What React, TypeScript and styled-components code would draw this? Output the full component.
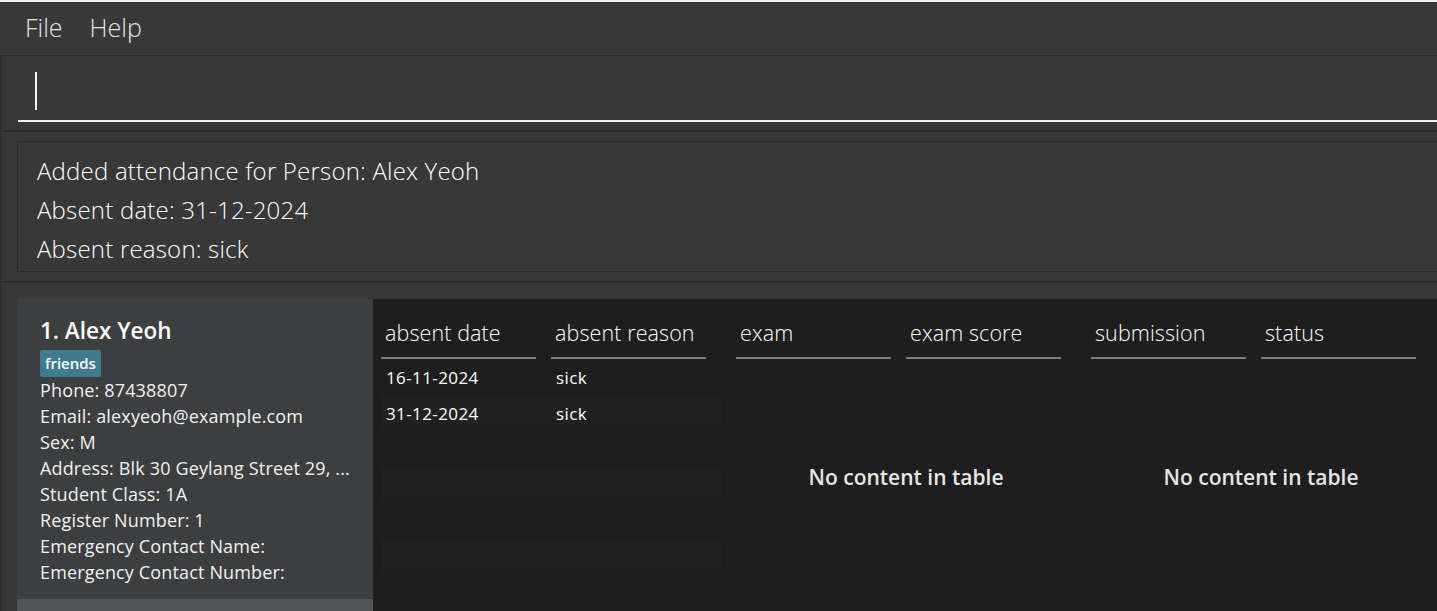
import React from "react";
import styled, { createGlobalStyle } from "styled-components";

const GlobalStyle = createGlobalStyle`
  html, body {
    margin: 0;
    padding: 0;
    background: #383838;
    overflow: hidden;
  }
  * { box-sizing: border-box; }
`;

const FONT = `"Open Sans", "Noto Sans", "Liberation Sans", sans-serif`;

const Window = styled.div`
  width: 1437px;
  height: 611px;
  display: flex;
  flex-direction: column;
  background: #383838;
  border-top: 2px solid #f0f0f0;
  font-family: ${FONT};
  overflow: hidden;
`;

const MenuBar = styled.div`
  height: 54px;
  display: flex;
  align-items: center;
  padding-left: 25px;
  gap: 27px;
  background: #383838;
  border-bottom: 1px solid #2b2b2b;
`;

const MenuItem = styled.span`
  font-size: 25px;
  font-weight: 300;
  color: #e4e4e4;
  line-height: 1;
  padding-bottom: 2px;
`;

const CommandPane = styled.div`
  height: 76px;
  border-left: 2px solid #2e2e2e;
  border-bottom: 2px solid #2b2b2b;
  padding: 0 0 8px 16px;
  display: flex;
  align-items: flex-end;
`;

const CommandField = styled.div`
  flex: 1;
  height: 60px;
  border-bottom: 2px solid #f2f2f2;
  display: flex;
  align-items: flex-start;
  padding: 10px 0 0 17px;
`;

const Caret = styled.div`
  width: 2px;
  height: 38px;
  background: #f5f5f5;
`;

const ResultPane = styled.div`
  height: 151px;
  border-left: 2px solid #2e2e2e;
  border-bottom: 2px solid #2b2b2b;
  padding: 9px 0 9px 15px;
  display: flex;
`;

const ResultBox = styled.div`
  flex: 1;
  border: 1px solid #2b2b2b;
  border-right: none;
  padding: 9px 0 0 19px;
  display: flex;
  flex-direction: column;
`;

const ResultLine = styled.div`
  font-size: 24px;
  font-weight: 300;
  letter-spacing: 0.2px;
  line-height: 39px;
  color: #ffffff;
  white-space: nowrap;
`;

const ListPane = styled.div`
  flex: 1;
  border-left: 2px solid #2e2e2e;
  padding: 16px 0 0 15px;
  display: flex;
  min-height: 0;
`;

const PersonList = styled.div`
  width: 356px;
  display: flex;
  flex-direction: column;
`;

const Card = styled.div<{ $odd?: boolean }>`
  background: ${(p) => (p.$odd ? "#505557" : "#3d3e40")};
  padding: ${(p) => (p.$odd ? "0" : "18px 0 0 23px")};
  height: ${(p) => (p.$odd ? "40px" : "300px")};
  flex: 0 0 auto;
  display: flex;
  flex-direction: column;
  align-items: flex-start;
`;

const Name = styled.div`
  font-size: 22.5px;
  font-weight: 600;
  line-height: 28px;
  color: #ffffff;
  margin-bottom: 5px;
`;

const Tag = styled.span`
  background: #3e7b91;
  color: #ffffff;
  font-size: 15px;
  font-weight: 600;
  line-height: 27px;
  padding: 0 5px;
  border-radius: 2px;
`;

const Field = styled.div`
  font-size: 18px;
  font-weight: 400;
  letter-spacing: 0.15px;
  line-height: 26px;
  color: #f2f2f2;
  white-space: nowrap;
`;

const TablePanel = styled.div`
  flex: 1;
  background: #1e1e1e;
  padding: 10px 0 0 8px;
  display: flex;
  gap: 15px;
  align-items: stretch;
`;

const Table = styled.div`
  width: 340px;
  display: flex;
  flex-direction: column;
`;

const HeaderRow = styled.div`
  display: grid;
  grid-template-columns: 170px 170px;
`;

const HeaderCell = styled.div`
  margin-right: 15px;
  height: 50px;
  border-bottom: 2px solid #7d7d7d;
  padding: 6px 0 0 4px;
  font-size: 21.5px;
  font-weight: 300;
  letter-spacing: 0.1px;
  line-height: 36px;
  color: #ffffff;
  white-space: nowrap;
`;

const Row = styled.div<{ $alt?: boolean }>`
  display: grid;
  grid-template-columns: 170px 170px;
  height: 36px;
  align-items: center;
  background: ${(p) => (p.$alt ? "#212121" : "transparent")};
`;

const Cell = styled.div`
  padding-left: 5px;
  font-size: 17px;
  letter-spacing: 0.4px;
  color: #ffffff;
  white-space: nowrap;
`;

const Placeholder = styled.div`
  flex: 0 0 auto;
  height: 236px;
  display: flex;
  align-items: center;
  justify-content: center;
  font-size: 21px;
  font-weight: 600;
  color: #e6e6e6;
`;

type TableData = { headers: [string, string]; rows: [string, string][] };

const tables: TableData[] = [
  {
    headers: ["absent date", "absent reason"],
    rows: [
      ["16-11-2024", "sick"],
      ["31-12-2024", "sick"],
      ["", ""],
      ["", ""],
      ["", ""],
      ["", ""],
      ["", ""],
    ],
  },
  { headers: ["exam", "exam score"], rows: [] },
  { headers: ["submission", "status"], rows: [] },
];

const fields = [
  "Phone: 87438807",
  "Email: alexyeoh@example.com",
  "Sex: M",
  "Address: Blk 30 Geylang Street 29, ...",
  "Student Class: 1A",
  "Register Number: 1",
  "Emergency Contact Name:",
  "Emergency Contact Number:",
];

export default function App() {
  return (
    <>
      <GlobalStyle />
      <Window>
        <MenuBar>
          <MenuItem>File</MenuItem>
          <MenuItem>Help</MenuItem>
        </MenuBar>
        <CommandPane>
          <CommandField>
            <Caret />
          </CommandField>
        </CommandPane>
        <ResultPane>
          <ResultBox>
            <ResultLine>Added attendance for Person: Alex Yeoh</ResultLine>
            <ResultLine>Absent date: 31-12-2024</ResultLine>
            <ResultLine>Absent reason: sick</ResultLine>
          </ResultBox>
        </ResultPane>
        <ListPane>
          <PersonList>
            <Card>
              <Name>1. Alex Yeoh</Name>
              <Tag>friends</Tag>
              {fields.map((f) => (
                <Field key={f}>{f}</Field>
              ))}
            </Card>
            <Card $odd />
          </PersonList>
          <TablePanel>
            {tables.map((t) => (
              <Table key={t.headers[0]}>
                <HeaderRow>
                  <HeaderCell>{t.headers[0]}</HeaderCell>
                  <HeaderCell>{t.headers[1]}</HeaderCell>
                </HeaderRow>
                {t.rows.length > 0 ? (
                  t.rows.map((r, i) => (
                    <Row key={i} $alt={i % 2 === 1}>
                      <Cell>{r[0]}</Cell>
                      <Cell>{r[1]}</Cell>
                    </Row>
                  ))
                ) : (
                  <Placeholder>No content in table</Placeholder>
                )}
              </Table>
            ))}
          </TablePanel>
        </ListPane>
      </Window>
    </>
  );
}
